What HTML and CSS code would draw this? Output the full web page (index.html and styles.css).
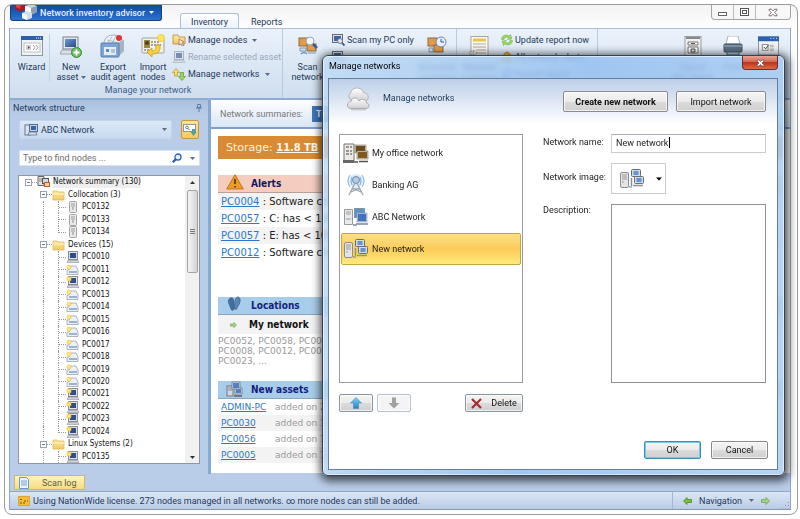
FILE: index.html
```html
<!DOCTYPE html>
<html lang="en">
<head>
<meta charset="utf-8">
<title>Network inventory advisor</title>
<link rel="stylesheet" href="styles.css">
</head>
<body>
<svg class="sprite" aria-hidden="true">
  <defs>
    <linearGradient id="gScreen" x1="0" y1="0" x2="1" y2="1"><stop offset="0" stop-color="#6f9ad2"/><stop offset="1" stop-color="#274a86"/></linearGradient>
    <linearGradient id="gFolder" x1="0" y1="0" x2="0" y2="1"><stop offset="0" stop-color="#fdeaa0"/><stop offset="1" stop-color="#f3c863"/></linearGradient>
    <linearGradient id="gCloud" x1="0" y1="0" x2="0" y2="1"><stop offset="0" stop-color="#fff"/><stop offset="1" stop-color="#cfcfd2"/></linearGradient>
    <linearGradient id="gUp" x1="0" y1="0" x2="0" y2="1"><stop offset="0" stop-color="#7fd0f5"/><stop offset="1" stop-color="#2583c4"/></linearGradient>
  </defs>
  <symbol id="logo" viewBox="0 0 26 17"><path d="M2 0h10v5l-5 3-5-3z" fill="#a81c25"/><path d="M3 0h5l-1 5-4-2z" fill="#d8464a"/><path d="M12 2l6-2 6 2v6l-6 3-6-3z" fill="#c6d0de"/><path d="M12 2l6 2v7l-6-3z" fill="#fff"/><path d="M18 4l6-2v6l-6 3z" fill="#8f9cb0"/><path d="M9 9l5-2 5 2v5l-5 2-5-2z" fill="#d5dce7"/><path d="M9 9l5 2v5l-5-2z" fill="#f5f8fb"/></symbol>
  <symbol id="wizard" viewBox="0 0 22 20"><rect x=".5" y=".5" width="21" height="19" fill="#f1f2f3" stroke="#8c98a8"/><rect x="0" y="0" width="22" height="4" fill="#2a61ae"/><path d="M15 2h1m1 0h1m1 0h1" stroke="#fff"/><rect x="3" y="7" width="16" height="9" fill="#fff" stroke="#c0c0c0"/><rect x="5" y="9" width="5" height="5" fill="#cfcfcf"/><path d="M7 10l2 1.500-2 1.500z" fill="#555"/><path d="M12 9l2 2.500-2 2.500m3-5l2 2.500-2 2.500" fill="none" stroke="#999"/></symbol>
  <symbol id="options" viewBox="0 0 22 20"><rect x=".5" y=".5" width="21" height="19" fill="#f1f2f3" stroke="#8c98a8"/><rect x="0" y="0" width="22" height="5" fill="#2a61ae"/><path d="M13 2h1m2 0h1m2 0h1" stroke="#fff"/><rect x="4.500" y="8.500" width="6" height="6" fill="#fff" stroke="#888"/><path d="M6 11l2 2 3-4" fill="none" stroke="#444"/><path d="M13 9h3v2h-3zM13 13h3v2h-3z" fill="#ddd" stroke="#999" stroke-width=".6"/></symbol>
  <symbol id="newpc" viewBox="0 0 22 22"><rect x="3" y="1" width="15" height="12" fill="#e2e5ea" stroke="#7b8390"/><rect x="5" y="3" width="11" height="8" fill="url(#gScreen)"/><path d="M2 14h17l2 4H0z" fill="#dde1e6" stroke="#8d949e" stroke-width=".8"/><circle cx="16.500" cy="16.500" r="5" fill="#6cc064" stroke="#3b8b38"/><path d="M13.500 16.500h6m-3-3v6" stroke="#fff" stroke-width="1.800"/></symbol>
  <symbol id="export" viewBox="0 0 26 24"><path d="M4 10C4 3 9 1 14 1s9 3 9 9" fill="#eef3f8" stroke="#a3b0c0"/><path d="M7 10l5-7m-1 8l5-9M7 6l12 3" stroke="#a9b9cb" fill="none"/><path d="M19 8l5-2v11l-5 5z" fill="#a7b3c2"/><rect x="1" y="9" width="18" height="14" rx="1" fill="#79a5d8" stroke="#587ba8"/><rect x="4" y="13" width="12" height="8" fill="#e4edf7"/><rect x="6" y="15" width="3" height="3" fill="#5b87be"/><path d="M11 16h4m-4 2h4" stroke="#7999bf"/><circle cx="19" cy="4" r="3" fill="#dc3434"/></symbol>
  <symbol id="import" viewBox="0 0 24 24"><rect x="1" y="4" width="22" height="15" rx="1" fill="#f1f0ea" stroke="#a3a39c"/><rect x="3" y="6" width="6" height="8" fill="#9b8b3d"/><circle cx="6" cy="9" r="2" fill="#4d3c1b"/><path d="M10 8h9m-9 3h10M3 16h7" stroke="#555" stroke-dasharray="2 1"/><circle cx="20" cy="4" r="3.500" fill="#ffe561" stroke="#f4cc37"/><path d="M19 11v3c0 4-3 6-8 6v3l-5-5 5-4v3c3 0 4-1 4-6z" fill="#fbd43c" stroke="#c99a1c" stroke-width=".8"/></symbol>
  <symbol id="folder" viewBox="0 0 14 12"><path d="M1 2h4l1 1h6v8H1z" fill="url(#gFolder)" stroke="#e0b75c" stroke-width=".8"/><path d="M1 5h11" stroke="#fff5c9"/></symbol>
  <symbol id="folderhand" viewBox="0 0 14 12"><path d="M1 1h5l1 2h6v7H1z" fill="url(#gFolder)" stroke="#b98b3a" stroke-width=".8"/><path d="M7 5l5 3-2 1 2 3-2 0-1-2-2 1z" fill="#f5e6d0" stroke="#855" stroke-width=".6"/></symbol>
  <symbol id="pc" viewBox="0 0 14 12"><rect x="2.500" y=".5" width="9" height="8" fill="#dfe1e4" stroke="#8a8f97"/><rect x="4" y="2" width="6" height="5" fill="#2f4f8c"/><path d="M2 9.500h10l1 2H1z" fill="#cfd2d6" stroke="#8f949c" stroke-width=".6"/></symbol>
  <symbol id="pcnew" viewBox="0 0 14 12"><use href="#pc"/><rect x="1" y="1" width="4" height="4" rx="1" fill="#ffe36a" stroke="#e9b93a" stroke-width=".6"/></symbol>
  <symbol id="printer" viewBox="0 0 14 12"><path d="M3 6l2-4h5l2 4v4.500H1V6z" fill="#edf0f4" stroke="#9aa2ae" stroke-width=".8"/><path d="M3 8h8" stroke="#4578b4" stroke-width="1.200"/><circle cx="3" cy="3" r="2" fill="#ffe77a" stroke="#eebf45" stroke-width=".6"/></symbol>
  <symbol id="tower" viewBox="0 0 14 12"><rect x="3.500" y=".5" width="7" height="11" rx="1" fill="#e9eaea" stroke="#a0a2a3"/><path d="M5 3h4M5 5h4" stroke="#999"/><rect x="6" y="6" width="2" height="3" fill="#bbb"/></symbol>
  <symbol id="netroot" viewBox="0 0 14 12"><path d="M1 .5h6v9H1z" fill="#e3e3e3" stroke="#666"/><path d="M2 3h4M2 5h4" stroke="#888"/><rect x="5.500" y="2.500" width="6" height="5" fill="#cfd7e2" stroke="#555"/><rect x="7.500" y="6.500" width="5" height="4" fill="#f6c9a0" stroke="#b9652a"/></symbol>
  <symbol id="arrows" viewBox="0 0 14 13"><path d="M4 .5l3.500 4h-2V8h-3V4.500h-2z" fill="#f8dc60" stroke="#b8922c" stroke-width=".7"/><path d="M10 12.500l3.500-4h-2V4.500h-3v4h-2z" fill="#a2d45c" stroke="#5c9a34" stroke-width=".7"/></symbol>
  <symbol id="scannet" viewBox="0 0 20 20"><rect x="1" y="2" width="9" height="8" fill="#e59a45" stroke="#8b6a4a"/><rect x="9" y="8" width="9" height="7" fill="#e59a45" stroke="#8b6a4a"/><path d="M2 12h6v3H2zM10 17h8" fill="#dde" stroke="#7d96b0"/><path d="M3 18q3-3 6 0" fill="none" stroke="#5f9ac8" stroke-width="1.500"/><circle cx="12" cy="5" r="4" fill="#eef5fb" stroke="#9aa7b5"/><path d="M15 8l4 4" stroke="#365f9e" stroke-width="2.500"/></symbol>
  <symbol id="sched" viewBox="0 0 20 20"><rect x="1" y="2" width="9" height="8" fill="#e59a45" stroke="#8b6a4a"/><rect x="7" y="9" width="9" height="7" fill="#e59a45" stroke="#8b6a4a"/><path d="M2 12h4v4H2z" fill="#dde" stroke="#7d96b0"/><circle cx="14" cy="6" r="5" fill="#e9f0fb" stroke="#6b86bd"/><path d="M14 3v3h3" fill="none" stroke="#2c53a0"/></symbol>
  <symbol id="scanpc" viewBox="0 0 13 12"><rect x=".5" y=".5" width="10" height="8" fill="#dfe1e4" stroke="#667"/><rect x="2" y="2" width="7" height="5" fill="#3968a9"/><circle cx="8" cy="7" r="2.500" fill="#dceaf7" stroke="#778"/><path d="M10 9l2.500 2.500" stroke="#345a94" stroke-width="1.800"/></symbol>
  <symbol id="report" viewBox="0 0 20 20"><rect x="2" y=".5" width="17" height="19" fill="#fbfaf6" stroke="#a9a394"/><path d="M4 4h13" stroke="#e9c34a" stroke-width="3"/><path d="M4 8h13M4 11h13M7 14h10M7 17h10" stroke="#b0a795"/><path d="M0 16h5l-1-2 4 3-4 3 1-2H0z" fill="#fff" stroke="#888" stroke-width=".6"/></symbol>
  <symbol id="refresh" viewBox="0 0 12 12"><path d="M.5 5.500C.5 1.500 5 0 8 2l1.500-1.500L11 5l-4.500.5L8 4C6 2.500 3.500 3 3 5.500z" fill="#9bd468" stroke="#6cb13f" stroke-width=".5"/><path d="M11.500 6.500c0 4-4.500 5.500-7.500 3.500L2.500 11.500 1 7l4.500-.5L4 8c2 1.500 4.500 1 5-1.500z" fill="#9bd468" stroke="#6cb13f" stroke-width=".5"/></symbol>
  <symbol id="bell" viewBox="0 0 12 12"><path d="M6 1q4 1 4 7l1 2H1l1-2q0-6 4-7z" fill="#edb93b" stroke="#b98520"/></symbol>
  <symbol id="cabinet" viewBox="0 0 18 20"><rect x="1" y=".5" width="16" height="19" fill="#eef0f1" stroke="#9b9fa3"/><path d="M2 2h14" stroke="#888" stroke-width="2"/><path d="M4 6h10v3H4zM4 11h10v6H4z" fill="#fff" stroke="#777"/><path d="M7 7.500h4M7 13h4v3H7z" fill="#ddd" stroke="#555"/></symbol>
  <symbol id="print" viewBox="0 0 20 20"><path d="M5 0h10l2 8H3z" fill="#fff" stroke="#aab3bd"/><rect x="1" y="8" width="18" height="8" rx="1" fill="#5d7185" stroke="#43525f"/><path d="M1 10h18" stroke="#9fb5c8"/><path d="M4 16h12v3H4z" fill="#9fd0ea" stroke="#567"/></symbol>
  <symbol id="monitors" viewBox="0 0 14 14"><rect x="1" y="2" width="5" height="10" fill="#e0e4ea" stroke="#667793"/><rect x="5.500" y="1.500" width="8" height="7" fill="#c9d5e5" stroke="#54688c"/><rect x="7" y="3" width="5" height="4" fill="#3264ae"/><path d="M5 9h7l1 3H4z" fill="#d4dbe5" stroke="#667793" stroke-width=".8"/></symbol>
  <symbol id="findopt" viewBox="0 0 14 14"><rect x=".5" y="1.500" width="12" height="7" fill="#fff" stroke="#8c949e"/><circle cx="4" cy="4.500" r="1.300" fill="none" stroke="#467" stroke-width=".8"/><path d="M5 5.500l1.500 1.500" stroke="#467"/><path d="M9 6v3H7.500l3 4 3-4H12V6z" fill="#49a0a8"/></symbol>
  <symbol id="lens" viewBox="0 0 10 10"><circle cx="6" cy="4" r="3" fill="#e6f1fc" stroke="#2666b8" stroke-width="1.300"/><path d="M3.800 6.200L.8 9.200" stroke="#1f559f" stroke-width="2"/></symbol>
  <symbol id="pin" viewBox="0 0 8 8"><path d="M2.500.5h3v3h-3zM1 4h6M4 4v4" fill="none" stroke="#5d7aa5"/></symbol>
  <symbol id="warn" viewBox="0 0 18 16"><path d="M9 .7L17.300 15H.7z" fill="#eb9a2b" stroke="#c3761b" stroke-linejoin="round"/><path d="M9 5v5m0 2v1.500" stroke="#4a2f0c" stroke-width="1.500"/></symbol>
  <symbol id="feet" viewBox="0 0 14 17"><path d="M3.500 2C6 1 7.500 4 7 7.500c0 2 .5 3.500 0 5.500-.5 1.800-2.600 1.800-3 0C3.600 11 2 9 1.500 6.500 1 4.500 2 2.500 3.500 2z" fill="#44709f" stroke="#2c527d" stroke-width=".6"/><path d="M11.500 1C9.500.5 8 3 8 6.500c0 2-1 3.500-.8 5.500.2 1.800 2.200 2 2.800.3.500-2 2-3 2.700-5.300C13.300 5 13.500 1.800 11.500 1z" fill="#5c87b5" stroke="#2c527d" stroke-width=".6"/></symbol>
  <symbol id="assets" viewBox="0 0 17 17"><rect x="1" y="5" width="6" height="10" fill="#d5d9de" stroke="#778"/><path d="M2 7h4M2 9h4" stroke="#889"/><rect x="6.500" y="1.500" width="7" height="6" fill="#5083c6" stroke="#dde"/><rect x="6" y="1" width="8" height="7" fill="none" stroke="#667" stroke-width=".7"/><rect x="9.500" y="7.500" width="6" height="5" fill="#5083c6" stroke="#dde"/><rect x="9" y="7" width="7" height="6" fill="none" stroke="#667" stroke-width=".7"/><path d="M8 15h8" stroke="#778" stroke-width="2"/></symbol>
  <symbol id="cloud" viewBox="0 0 24 24"><path d="M5.500 13A4 4 0 0 1 4.500 6C5 2.500 8.500.8 11.500 1c3.500.2 5.500 2.500 6 4.500 3 .3 5 2.500 4.800 5-.2 2.500-2.300 4-4.800 4z" fill="url(#gCloud)" stroke="#a4a6ab" stroke-width=".8"/><path d="M5 21.500c-2 0-3.500-1.500-3.500-3.500S3 14.500 5 14.500c.5-2.500 2-3.500 4-3.500s3.700 1.200 4 3c3-3.500 8-1 7.500 2 2 .5 2.500 1.500 2.500 2.700 0 1.800-1.300 2.800-3 2.800z" fill="url(#gCloud)" stroke="#9a9ca2" stroke-width=".8"/><path d="M5 22.800h15" stroke="#b9bac0"/></symbol>
  <symbol id="office" viewBox="0 0 26 22"><path d="M1 2h10v17H1z" fill="#eceae4" stroke="#77746c"/><path d="M3 5h6M3 9h6M3 12h6" stroke="#444" stroke-dasharray="3 1"/><path d="M0 18h11v3H0z" fill="#666"/><rect x="12.500" y="3.500" width="10" height="7" fill="#6e4b17" stroke="#c9c3b2"/><rect x="12" y="3" width="11" height="8" fill="none" stroke="#77705f" stroke-width=".6"/><rect x="14.500" y="9.500" width="10" height="7" fill="#7d5a1c" stroke="#d2ccbc"/><rect x="14" y="9" width="11" height="8" fill="none" stroke="#77705f" stroke-width=".6"/><path d="M16 19.500h9M11 20h4" stroke="#555" stroke-width="1.500"/></symbol>
  <symbol id="banking" viewBox="0 0 26 22"><circle cx="13" cy="7" r="7" fill="#d3e6f6" opacity=".8"/><path d="M7 1q-4 6 0 12M19 1q4 6 0 12M9 3q-2 4 0 8m8-8q2 4 0 8" fill="none" stroke="#79aede"/><circle cx="13" cy="6" r="3.500" fill="#b4cce2" stroke="#6e8cab"/><path d="M12 9L6 21m8-12l6 12M9 15h8M8 18l9-4m1 4l-9-4" stroke="#9aa5b1" fill="none" stroke-width="1.300"/></symbol>
  <symbol id="abc" viewBox="0 0 26 22"><path d="M1.500 3.500h8v15h-8z" fill="#eaebec" stroke="#999"/><path d="M3 6h5M3 8h5M3 13h5" stroke="#999"/><rect x="11.500" y="2.500" width="10" height="9" fill="#5b8fd0" stroke="#8494a8"/><rect x="14.500" y="7.500" width="9" height="8" fill="#3f73ba" stroke="#b9c5d4"/><rect x="14" y="7" width="10" height="9" fill="none" stroke="#8494a8" stroke-width=".6"/><path d="M13 18h12M10 19h4" stroke="#9aa5b3" stroke-width="2"/></symbol>
  <symbol id="newnet" viewBox="0 0 26 22"><rect x="1.500" y="4.500" width="8" height="15" rx="1.500" fill="#e3e4e6" stroke="#8b8d90"/><path d="M3 7h5M3 9h5M3 11h5M3 14h2" stroke="#999"/><rect x="12.500" y="1.500" width="9" height="7" rx="1" fill="#d6dbe1" stroke="#666c74"/><rect x="14.500" y="3" width="5" height="4" fill="#5f94d6"/><rect x="15.500" y="8.500" width="9" height="7" rx="1" fill="#d6dbe1" stroke="#666c74"/><rect x="17.500" y="10" width="5" height="4" fill="#5f94d6"/><path d="M12.500 10v8M14 17.500h10" stroke="#8a9098" stroke-width="1.500"/><path d="M10 19h3" stroke="#777"/></symbol>
  <symbol id="up" viewBox="0 0 12 12"><path d="M6 .5L11.500 6H8.500v5.500h-5V6H.5z" fill="url(#gUp)" stroke="#3d8dbf" stroke-width=".6"/></symbol>
  <symbol id="down" viewBox="0 0 12 12"><path d="M6 11.500L.5 6h3.500V.5h4V6h3.500z" fill="#a1a1a1"/></symbol>
  <symbol id="cross" viewBox="0 0 11 11"><path d="M1 1l9 9M10 1L1 10" stroke="#a62d29" stroke-width="2.200"/></symbol>
  <symbol id="closex" viewBox="0 0 9 8"><path d="M1 1h2l1.500 1.500L6 1h2v1L6 4l2 2v1H6L4.500 5.500 3 7H1V6l2-2-2-2z" fill="#fff" stroke="#6b5a5f" stroke-width=".8"/></symbol>
  <symbol id="goleft" viewBox="0 0 9 8"><path d="M.5 4L4 .5v2h4.500v3H4v2z" fill="#80bd3c" stroke="#4b8a24" stroke-width=".8"/></symbol>
  <symbol id="goright" viewBox="0 0 9 8"><path d="M8.500 4L5 .5v2H.5v3H5v2z" fill="#a5d184" stroke="#6ba749" stroke-width=".8"/></symbol>
  <symbol id="doc" viewBox="0 0 12 12"><path d="M1.500.5h7l2 2v9h-9z" fill="#eaf3fc" stroke="#6f98c6"/><path d="M3 4h6M3 6h6M3 8h6" stroke="#74a6da"/></symbol>
  <symbol id="key" viewBox="0 0 12 10"><rect x=".5" y=".5" width="11" height="9" fill="#f3bd33" stroke="#dba637"/><path d="M2 3.500h3M6 5h4M2 7h6" fill="none" stroke="#7d5a14" stroke-dasharray="2 1"/></symbol>
  <symbol id="caret" viewBox="0 0 5 3"><path d="M0 0h5L2.500 3z" fill="currentColor"/></symbol>
</svg>

<div class="window">
  <header class="titlebar">
    <button class="app-button"><svg width="26" height="17"><use href="#logo"/></svg><span>Network inventory advisor</span><svg class="caret" width="5" height="3"><use href="#caret"/></svg></button>
    <nav class="tabs"><a class="tab active" href="#">Inventory</a><a class="tab" href="#">Reports</a></nav>
    <div class="caption-buttons">
      <button aria-label="Minimize"><svg width="12" height="10" viewBox="0 0 12 10"><rect x="1.500" y="5.500" width="8" height="3" fill="#fff" stroke="#666"/></svg></button>
      <button aria-label="Maximize"><svg width="12" height="10" viewBox="0 0 12 10"><rect x="1.500" y="1.500" width="8" height="7" fill="#fff" stroke="#555"/><rect x="3.500" y="3.500" width="4" height="3" fill="#fff" stroke="#555"/></svg></button>
      <button class="wide" aria-label="Close"><svg width="10" height="9"><use href="#closex"/></svg></button>
    </div>
  </header>

  <div class="app">
    <div class="ribbon">
      <section class="group g-manage">
        <div class="tools">
          <button class="big wizard"><svg width="22" height="20"><use href="#wizard"/></svg><span>Wizard</span></button>
          <button class="big b-new"><svg width="22" height="22"><use href="#newpc"/></svg><span>New<br>asset <svg class="caret" width="5" height="3"><use href="#caret"/></svg></span></button>
          <button class="big b-export"><svg width="26" height="24"><use href="#export"/></svg><span>Export<br>audit agent</span></button>
          <button class="big b-import"><svg width="24" height="24"><use href="#import"/></svg><span>Import<br>nodes</span></button>
          <div class="stack">
            <button class="small"><svg width="14" height="12"><use href="#folderhand"/></svg>Manage nodes<svg class="caret" width="5" height="3"><use href="#caret"/></svg></button>
            <button class="small off" disabled><svg width="14" height="12"><use href="#pc"/></svg>Rename selected asset</button>
            <button class="small"><svg width="14" height="13"><use href="#arrows"/></svg>Manage networks<svg class="caret" width="5" height="3"><use href="#caret"/></svg></button>
          </div>
        </div>
        <div class="group-title">Manage your network</div>
      </section>
      <section class="group g-scan">
        <div class="tools">
          <button class="big b-scan"><svg width="20" height="20"><use href="#scannet"/></svg><span>Scan<br>network</span></button>
          <div class="stack">
            <button class="small"><svg width="13" height="12"><use href="#scanpc"/></svg>Scan my PC only</button>
            <button class="small" aria-label="Scan selected"><svg width="13" height="12"><use href="#scanpc"/></svg></button>
          </div>
          <button class="big b-sched"><svg width="20" height="20"><use href="#sched"/></svg><span>Schedule<br>scanning</span></button>
        </div>
      </section>
      <section class="group g-report">
        <div class="tools">
          <button class="big b-report"><svg width="20" height="20"><use href="#report"/></svg><span>Network<br>summary</span></button>
          <div class="stack">
            <button class="small"><svg width="12" height="12"><use href="#refresh"/></svg>Update report now</button>
            <button class="small"><svg width="12" height="12"><use href="#bell"/></svg>All network alerts</button>
            <button class="small"><svg width="12" height="12"><use href="#lens"/></svg>Search report</button>
          </div>
        </div>
      </section>
      <section class="group g-output">
        <div class="tools">
          <button class="big b-out"><svg width="18" height="20"><use href="#cabinet"/></svg><span>Export<br>this report</span></button>
          <button class="big b-print"><svg width="20" height="20"><use href="#print"/></svg><span>Print</span></button>
          <button class="big b-opt" aria-label="Options"><svg width="21" height="20"><use href="#options"/></svg></button>
        </div>
      </section>
    </div>

    <div class="main">
      <aside class="sidebar">
        <h2 class="panel-title">Network structure<svg width="8" height="8"><use href="#pin"/></svg></h2>
        <div class="side-row">
          <button class="combo"><svg width="14" height="14"><use href="#monitors"/></svg><span>ABC Network</span><svg class="caret" width="5" height="3"><use href="#caret"/></svg></button>
          <button class="find-toggle" aria-label="Search options"><svg width="14" height="14"><use href="#findopt"/></svg></button>
        </div>
        <div class="search"><input type="text" placeholder="Type to find nodes ..." aria-label="Find nodes"><svg width="10" height="10"><use href="#lens"/></svg><svg class="caret" width="5" height="3"><use href="#caret"/></svg></div>
        <div class="tree-box">
          <ul class="tree">
            <li class="l0"><i class="exp"></i><i class="stub"></i><svg width="14" height="12"><use href="#netroot"/></svg><span class="sel">Network summary (130)</span></li>
            <li class="l1"><i class="exp"></i><i class="stub"></i><svg width="14" height="12"><use href="#folder"/></svg><span>Collocation (3)</span></li>
            <li class="l2"><i class="line"></i><i class="join"></i><svg width="14" height="12"><use href="#tower"/></svg><span>PC0132</span></li>
            <li class="l2"><i class="line"></i><i class="join"></i><svg width="14" height="12"><use href="#tower"/></svg><span>PC0133</span></li>
            <li class="l2"><i class="line"></i><i class="join last"></i><svg width="14" height="12"><use href="#tower"/></svg><span>PC0134</span></li>
            <li class="l1"><i class="exp"></i><i class="stub"></i><svg width="14" height="12"><use href="#folder"/></svg><span>Devices (15)</span></li>
            <li class="l2"><i class="line"></i><i class="join"></i><svg width="14" height="12"><use href="#pc"/></svg><span>PC0010</span></li>
            <li class="l2"><i class="line"></i><i class="join"></i><svg width="14" height="12"><use href="#printer"/></svg><span>PC0011</span></li>
            <li class="l2"><i class="line"></i><i class="join"></i><svg width="14" height="12"><use href="#pcnew"/></svg><span>PC0012</span></li>
            <li class="l2"><i class="line"></i><i class="join"></i><svg width="14" height="12"><use href="#printer"/></svg><span>PC0013</span></li>
            <li class="l2"><i class="line"></i><i class="join"></i><svg width="14" height="12"><use href="#printer"/></svg><span>PC0014</span></li>
            <li class="l2"><i class="line"></i><i class="join"></i><svg width="14" height="12"><use href="#printer"/></svg><span>PC0015</span></li>
            <li class="l2"><i class="line"></i><i class="join"></i><svg width="14" height="12"><use href="#printer"/></svg><span>PC0016</span></li>
            <li class="l2"><i class="line"></i><i class="join"></i><svg width="14" height="12"><use href="#printer"/></svg><span>PC0017</span></li>
            <li class="l2"><i class="line"></i><i class="join"></i><svg width="14" height="12"><use href="#printer"/></svg><span>PC0018</span></li>
            <li class="l2"><i class="line"></i><i class="join"></i><svg width="14" height="12"><use href="#printer"/></svg><span>PC0019</span></li>
            <li class="l2"><i class="line"></i><i class="join"></i><svg width="14" height="12"><use href="#printer"/></svg><span>PC0020</span></li>
            <li class="l2"><i class="line"></i><i class="join"></i><svg width="14" height="12"><use href="#pcnew"/></svg><span>PC0021</span></li>
            <li class="l2"><i class="line"></i><i class="join"></i><svg width="14" height="12"><use href="#pcnew"/></svg><span>PC0022</span></li>
            <li class="l2"><i class="line"></i><i class="join"></i><svg width="14" height="12"><use href="#pcnew"/></svg><span>PC0023</span></li>
            <li class="l2"><i class="line"></i><i class="join last"></i><svg width="14" height="12"><use href="#pcnew"/></svg><span>PC0024</span></li>
            <li class="l1"><i class="exp"></i><i class="stub"></i><svg width="14" height="12"><use href="#folder"/></svg><span>Linux Systems (2)</span></li>
            <li class="l2"><i class="line"></i><i class="join"></i><svg width="14" height="12"><use href="#pcnew"/></svg><span>PC0135</span></li>
          </ul>
          <div class="scrollbar"><svg class="up" width="5" height="3"><use href="#caret"/></svg><div class="thumb"></div><svg class="dn" width="5" height="3"><use href="#caret"/></svg></div>
        </div>
      </aside>

      <main class="content">
        <div class="summary-bar"><span>Network summaries:</span><b>TO</b></div>
        <div class="report">
          <div class="storage">Storage: <a href="#">11.8 TB</a></div>
          <section class="block alerts">
            <h3><svg width="18" height="16"><use href="#warn"/></svg>Alerts</h3>
            <p><a href="#">PC0004</a> : Software changed</p>
            <p><a href="#">PC0057</a> : C: has &lt; 10% free</p>
            <p><a href="#">PC0057</a> : E: has &lt; 10% free</p>
            <p><a href="#">PC0012</a> : Software changed</p>
          </section>
          <section class="block locations">
            <h3><svg width="14" height="17"><use href="#feet"/></svg>Locations</h3>
            <h4><svg width="7" height="6"><use href="#goright"/></svg>My network</h4>
            <div class="nodes">PC0052, PC0058, PC00<br>PC0008, PC0012, PC00<br>PC0023, ...</div>
          </section>
          <section class="block assets">
            <h3><svg width="17" height="17"><use href="#assets"/></svg>New assets</h3>
            <p><a href="#">ADMIN-PC</a><span>added on 2</span></p>
            <p><a href="#">PC0030</a><span>added on 1</span></p>
            <p><a href="#">PC0056</a><span>added on 1</span></p>
            <p><a href="#">PC0005</a><span>added on 1</span></p>
          </section>
        </div>
      </main>
    </div>

    <div class="dock"><button class="scan-log"><svg width="12" height="12"><use href="#doc"/></svg>Scan log</button></div>
    <footer class="status">
      <svg width="12" height="10"><use href="#key"/></svg>
      <span class="message">Using NationWide license. 273 nodes managed in all networks. ∞ more nodes can still be added.</span>
      <div class="navigation"><svg width="9" height="8"><use href="#goleft"/></svg><span>Navigation</span><svg class="caret" width="5" height="3"><use href="#caret"/></svg><svg width="9" height="8"><use href="#goright"/></svg></div>
      <i class="grip"></i>
    </footer>
  </div>
</div>

<div class="dialog" role="dialog" aria-labelledby="dlg-title">
  <div class="dialog-title"><span id="dlg-title">Manage networks</span><button class="dialog-close" aria-label="Close dialog"><svg width="9" height="8"><use href="#closex"/></svg></button></div>
  <form class="dialog-body">
    <div class="dialog-head">
      <svg width="24" height="24"><use href="#cloud"/></svg>
      <span>Manage networks</span>
      <button type="button" class="btn create">Create new network</button>
      <button type="button" class="btn import">Import network</button>
    </div>
    <div class="columns">
      <div class="left">
        <ul class="networks">
          <li><svg width="26" height="22"><use href="#office"/></svg>My office network</li>
          <li><svg width="26" height="22"><use href="#banking"/></svg>Banking AG</li>
          <li><svg width="26" height="22"><use href="#abc"/></svg>ABC Network</li>
          <li class="current"><svg width="26" height="22"><use href="#newnet"/></svg>New network</li>
        </ul>
        <div class="list-actions">
          <button type="button" class="btn tiny" aria-label="Move up"><svg width="12" height="12"><use href="#up"/></svg></button>
          <button type="button" class="btn tiny" aria-label="Move down" disabled><svg width="12" height="12"><use href="#down"/></svg></button>
          <button type="button" class="btn delete"><svg width="11" height="11"><use href="#cross"/></svg>Delete</button>
        </div>
      </div>
      <div class="fields">
        <label for="net-name">Network name:</label>
        <div class="name-cell"><input id="net-name" type="text" value="New network"><i class="cursor"></i></div>
        <label for="net-image">Network image:</label>
        <button type="button" id="net-image" class="picker"><svg width="26" height="22"><use href="#newnet"/></svg><svg class="caret" width="6" height="4" viewBox="0 0 5 3"><use href="#caret"/></svg></button>
        <label for="net-desc">Description:</label>
        <textarea id="net-desc"></textarea>
      </div>
    </div>
    <div class="dialog-actions"><button type="button" class="btn ok">OK</button><button type="button" class="btn">Cancel</button></div>
  </form>
</div>
</body>
</html>
```
FILE: styles.css
```css
* { box-sizing: border-box; }
body { margin: 0; height: 100vh; padding: 4px 2px 4px 4px; background: #fff; overflow: hidden; font: 9px/12px Roboto, "Open Sans", sans-serif; color: #1e395b; position: relative; }
button, input, textarea { font: inherit; color: inherit; margin: 0; }
button { padding: 0; border: 0; background: none; white-space: nowrap; }
svg { display: block; flex: none; }
a { color: #2a7ac8; }
ul, h2, h3, h4, p { margin: 0; padding: 0; font-weight: normal; font-size: inherit; }
.sprite { position: absolute; width: 0; height: 0; }
.caret { color: #5b6b80; }

.window { height: 100%; border: 1px solid #9b9b9b; border-radius: 8px; display: flex; flex-direction: column; padding: 0 6px 4px 4px; background: linear-gradient(#f3f3f3, #fff 24px); overflow: hidden; }
.titlebar { height: 23px; flex: none; display: flex; align-items: flex-start; }
.app-button { display: flex; align-items: center; width: 152px; height: 16px; margin-left: 1px; padding-left: 2px; background: linear-gradient(#12499a, #1c61bd 60%, #2b74cf); border: 1px solid #173f7d; border-top: 0; border-radius: 0 0 3px 3px; color: #e5efff; font-weight: 500; overflow: hidden; }
.app-button span { margin-left: 1px; }
.app-button .caret { margin: 0 7px 0 auto; color: #fff; }
.tabs { display: flex; margin: 8px auto 0 18px; }
.tab { height: 16px; padding: 2px 11px 0; color: #1e395b; text-decoration: none; border: 1px solid transparent; }
.tab.active { width: 59px; text-align: center; padding: 2px 0 0; border-color: #a9bfdc; border-bottom: 0; border-radius: 3px 3px 0 0; background: linear-gradient(#fff, #eaf2fb); }
.caption-buttons { display: flex; border: 1px solid #a5a5a5; border-top: 0; border-radius: 0 0 4px 4px; height: 15px; background: #f7f7f7; }
.caption-buttons button { width: 22px; display: flex; align-items: center; justify-content: center; border-right: 1px solid #bbb; }
.caption-buttons .wide { width: 34px; border: 0; }

.app { flex: 1; min-height: 0; display: flex; flex-direction: column; background: #bacde8; border-left: 1px solid #8fa9ca; border-right: 1px solid #8fa9ca; }
.ribbon { height: 72px; flex: none; display: flex; border-top: 1px solid #a9bfdc; border-bottom: 2px solid #8eadd5; background: linear-gradient(#ebf2fb, #d9e5f3 60%, #cfdeef); }
.group { display: flex; flex: none; flex-direction: column; justify-content: space-between; border-right: 1px solid #b8cbe2; padding: 5px 0 2px; }
.group-title { text-align: center; color: #3e5f88; padding-left: 4px; }
.tools { display: flex; align-items: flex-start; }
.big { display: flex; flex: none; flex-direction: column; align-items: center; height: 48px; line-height: 10px; text-align: center; }
.big > span { margin-top: auto; height: 20px; }
.big > svg { margin-top: 2px; }
.big .caret { display: inline-block; vertical-align: middle; }
.wizard { width: 40px; border-right: 1px solid #c3d3e6; padding-left: 4px; }
.b-new { width: 42px; } .b-export { width: 42px; } .b-import { width: 38px; }
.b-export > svg, .b-import > svg { margin-top: 0; }
.stack { display: flex; flex-direction: column; gap: 5px; }
.small { display: flex; align-items: center; gap: 2px; height: 12px; }
.small .caret { margin-left: 3px; }
.off { color: #9aa7b8; } .off svg { opacity: .6; }
.g-manage { width: 273px; }
.g-scan { width: 174px; } .b-scan { width: 49px; } .b-sched { width: 46px; margin-left: auto; }
.g-report { width: 141px; } .b-report { width: 44px; }
.g-output { flex: 1; border: 0; } .g-output .tools { justify-content: flex-end; }
.b-out { width: 40px; } .b-print { width: 40px; } .b-opt { width: 31px; margin-right: 6px; }

.main { flex: 1; min-height: 0; display: flex; }
.sidebar { width: 198px; flex: none; display: flex; flex-direction: column; padding-bottom: 10px; }
.panel-title { height: 15px; padding: 1px 5px 0 3px; display: flex; justify-content: space-between; align-items: center; background: linear-gradient(#a9c1df, #b8cce7); color: #1e395b; }
.side-row { display: flex; gap: 9px; margin: 5px 9px 11px; height: 19px; }
.combo { flex: 1; display: flex; align-items: center; gap: 3px; padding: 0 4px; background: linear-gradient(#dbe8f7, #c9dbf0); border: 1px solid #c3d5eb; border-radius: 2px; }
.combo .caret { margin-left: auto; }
.find-toggle { width: 18px; display: flex; align-items: center; justify-content: center; border: 1px solid #c5983d; background: linear-gradient(#fbe39a, #fbc952); border-radius: 2px; }
.search { display: flex; align-items: center; height: 16px; margin: 0 8px 8px 9px; background: #fff; border: 1px solid #d6e2f1; padding: 0 4px 0 3px; gap: 8px; }
.search input { flex: 1; min-width: 0; border: 0; padding: 0; outline: 0; background: none; }
.search input::placeholder { color: #6d6d6d; opacity: 1; }
.tree-box { flex: 1; min-height: 0; margin: 1px 8px 0; border: 1px solid #8d97a5; background: #fff; display: flex; }
.tree { flex: 1; min-width: 0; list-style: none; display: flex; flex-direction: column; font-size: 8px; font-family: "DejaVu Sans Condensed", "DejaVu Sans", sans-serif; color: #111; }
.tree li { flex: 1; min-height: 0; display: flex; align-items: center; white-space: nowrap; }
.tree li span { margin-left: 2px; }
.tree .sel { background: #eee; }
.l0 { padding-left: 6px; } .l1 { padding-left: 21px; } .l2 { padding-left: 24px; }
.exp { width: 7px; height: 7px; border: 1px solid #98a2b0; background: linear-gradient(#6b7785, #6b7785) center / 3px 1px no-repeat #fff; }
.stub { width: 5px; border-top: 1px dotted #999; }
.line { width: 15px; align-self: stretch; border-left: 1px dotted #999; }
.join { width: 8px; align-self: stretch; border-left: 1px dotted #999; background: repeating-linear-gradient(90deg, #999 0 1px, #fff 1px 2px) 0 50% / 100% 1px no-repeat; }
.join.last { align-self: flex-start; height: 7px; background-position: 0 100%; }
.scrollbar { width: 14px; background: #f1f1f1; display: flex; flex-direction: column; align-items: center; padding: 5px 0 4px; }
.scrollbar svg { color: #333; }
.scrollbar .up { transform: rotate(180deg); }
.thumb { width: 11px; height: 83px; margin: 6px 0 auto; border: 1px solid #a3a3a3; border-radius: 2px; background: repeating-linear-gradient(#777 0 1px, transparent 1px 2px) center / 5px 5px no-repeat, linear-gradient(90deg, #f5f5f5, #d3d3d6); }

.content { flex: 1; min-width: 0; display: flex; flex-direction: column; border-left: 3px solid #84a9d4; }
.summary-bar { height: 29px; flex: none; display: flex; align-items: center; gap: 9px; padding-left: 9px; background: linear-gradient(#fff, #d8e6f6); border-bottom: 2px solid #7ba0cd; color: #777; }
.summary-bar b { background: #3f76bd; color: #fff; padding: 2px 4px; }
.report { flex: 1; min-height: 0; background: #fff; padding: 7px 8px 0 7px; font-family: "DejaVu Sans", sans-serif; white-space: nowrap; overflow: hidden; margin-bottom: 1px; }
.storage { height: 23px; padding: 0 8px; background: #d98b33; color: #fff1dc; font-size: 11px; line-height: 23px; }
.storage a { color: #fff8ec; font-weight: bold; font-family: "DejaVu Sans Condensed", "DejaVu Sans", sans-serif; }
.block h3 { display: flex; align-items: center; height: 18px; font: bold 10px "DejaVu Sans Condensed", "DejaVu Sans", sans-serif; color: #14207e; background: #a8cdea; border-bottom: 1px solid #8aa5bc; }
.block h3 svg { margin: 0 8px; }
.alerts { margin-top: 16px; height: 122px; color: #222; font-size: 10px; }
.alerts h3 { background: #f4cdbf; border-color: #b9a198; color: #14145e; }
.block.alerts h3 svg { margin: 0 7px 3px 8px; }
.alerts p { height: 17px; line-height: 17px; padding-left: 3px; }
.alerts p:nth-of-type(odd), .assets p:nth-of-type(even) { background: #f3f3f3; }
.locations { height: 84px; }
.block.locations h3 svg { margin: 0 10px 3px 9px; }
.block h4 { display: flex; align-items: center; height: 19px; padding-left: 12px; font: bold 10px "DejaVu Sans Condensed", "DejaVu Sans", sans-serif; color: #111; background: #f3f3f3; }
.block h4 svg { margin-right: 12px; }
.nodes { color: #999; font-size: 9px; line-height: 10px; padding-top: 2px; }
.assets p { height: 16px; line-height: 16px; padding-left: 3px; display: flex; color: #999; font-size: 9px; }
.assets p a { width: 54px; }

.dock { height: 17px; flex: none; padding: 1px 4px 1px; display: flex; }
.scan-log { width: 71px; display: flex; align-items: center; gap: 12px; padding-left: 3px; border: 1px solid #c9b878; background: linear-gradient(#fdf3bd, #f6dd7c); color: #5c5c4a; }
.status { height: 19px; flex: none; display: flex; align-items: center; border-top: 1px solid #8fa9ca; border-bottom: 1px solid #8797ad; background: linear-gradient(#dbe7f5, #b9cce5); padding-left: 8px; }
.message { margin-left: 3px; flex: 1; white-space: nowrap; }
.navigation { display: flex; align-items: center; gap: 7px; align-self: stretch; padding-left: 10px; border-left: 1px solid #a2b7d3; }
.grip { width: 8px; height: 8px; margin: 8px 1px 0 11px; background: radial-gradient(#7d96b8 1px, transparent 1px) 0 0 / 3px 3px; clip-path: polygon(100% 0, 100% 100%, 0 100%); }

.dialog { position: absolute; left: 322px; right: 15px; top: 55px; bottom: 43px; display: flex; flex-direction: column; padding: 0 6px 5px 5px; border: 1px solid #34424f; border-radius: 6px; background: linear-gradient(100deg, rgba(190, 218, 246, .8), rgba(148, 192, 240, .84) 50%, rgba(170, 206, 244, .84)); -webkit-backdrop-filter: blur(2px); backdrop-filter: blur(2px); box-shadow: inset 0 0 0 1px rgba(255, 255, 255, .6), 1px 2px 9px 3px rgba(0, 0, 0, .65); color: #222; }
.dialog-title { height: 22px; flex: none; display: flex; align-items: flex-start; justify-content: space-between; padding-left: 1px; color: #000; line-height: 21px; }
.dialog-close { width: 36px; height: 14px; display: flex; align-items: center; justify-content: center; border: 1px solid #6c3030; border-top: 0; border-radius: 0 0 4px 4px; background: linear-gradient(#e6a596, #d0604a 50%, #bd3419 50%, #dc6a42); }
.dialog-body { flex: 1; min-height: 0; display: flex; flex-direction: column; border: 1px solid #667f9b; background: linear-gradient(#bccfe8, #fff 45px); padding: 0 11px 10px 10px; }
.dialog-head { display: flex; align-items: center; height: 45px; padding-left: 7px; color: #1e395b; }
.dialog-head span { margin: 0 auto 8px 13px; }
.dialog-head > svg { margin-bottom: 6px; }
.btn { height: 18px; display: flex; align-items: center; justify-content: center; border: 1px solid #8a8a8a; border-radius: 2px; background: linear-gradient(#f4f4f4, #ebebeb 50%, #dcdcdc 50%, #cfcfcf); box-shadow: inset 0 0 0 1px rgba(255, 255, 255, .7); color: #111; }
.dialog-head .btn { height: 21px; }
.create { width: 105px; margin-right: 8px; font-weight: 700; }
.import { width: 90px; }
.columns { flex: 1; min-height: 0; display: flex; gap: 20px; padding-top: 10px; }
.left { width: 184px; flex: none; display: flex; flex-direction: column; }
.networks { flex: 1; list-style: none; border: 1px solid #999ca3; padding: 2px 1px; }
.networks li { height: 32px; display: flex; align-items: center; gap: 3px; padding-left: 1px; border: 1px solid transparent; border-radius: 2px; }
.networks .current { border-color: #c6a54a; background: linear-gradient(#fcdf8a, #fccb58 50%, #fdeb7c); }
.list-actions { display: flex; gap: 4px; margin-top: 11px; }
.tiny { width: 34px; border-color: #8595a8; }
.tiny:disabled { background: #f4f4f4; border-color: #b5c3d3; }
.delete { width: 58px; margin-left: auto; gap: 9px; border-color: #8595a8; }
.fields { flex: 1; min-width: 0; display: grid; grid-template-columns: 68px 1fr; grid-template-rows: 19px 31px 1fr; row-gap: 10px; margin-bottom: 29px; }
.fields label { padding-top: 2px; white-space: nowrap; }
.fields label[for="net-image"] { padding-top: 8px; }
.fields label[for="net-desc"] { padding-top: 0; }
.name-cell { display: flex; position: relative; }
.name-cell input { flex: 1; min-width: 0; border: 1px solid #c9ccd1; border-top-color: #aaadb3; padding: 0 4px 2px; background: #fff; outline: 0; }
.cursor { position: absolute; left: 58px; top: 3px; height: 11px; border-left: 1px solid #000; }
.picker { width: 55px; display: flex; align-items: center; justify-content: space-between; padding: 0 3px 0 7px; border: 1px solid #c9ccd1; background: #fff; }
.picker .caret { color: #000; }
textarea { display: block; width: 100%; height: 100%; resize: none; border: 1px solid #8f9194; background: #fff; padding: 3px; outline: 0; }
.dialog-actions { display: flex; justify-content: flex-end; gap: 10px; margin: 29px -2px 0 0; }
.dialog-actions .btn { width: 57px; }
.dialog-actions .ok { border-color: #3b8fb4; box-shadow: inset 0 0 0 1px #6fcbe9; }
```
